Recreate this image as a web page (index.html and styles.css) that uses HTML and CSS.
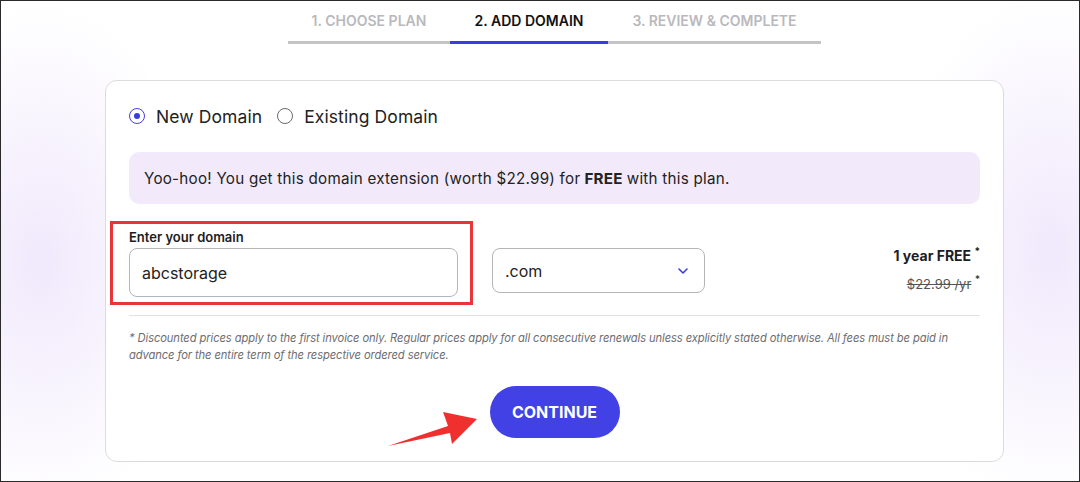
FILE: index.html
```html
<!DOCTYPE html>
<html lang="en">
<head>
    <meta charset="UTF-8">
    <meta name="viewport" content="width=device-width, initial-scale=1.0">
    <title>Add Domain</title>
    <link rel="stylesheet" href="styles.css">
</head>
<body>
    <div class="page">
        <div class="wrap">
            <div class="steps">
                <div class="step step-1">1. CHOOSE PLAN</div>
                <div class="step step-2 active">2. ADD DOMAIN</div>
                <div class="step step-3">3. REVIEW &amp; COMPLETE</div>
            </div>

            <div class="card">
                <div class="radios">
                    <label class="radio checked"><span class="dot"></span>New Domain</label>
                    <label class="radio"><span class="dot"></span>Existing Domain</label>
                </div>

                <div class="promo">
                    Yoo-hoo! You get this domain extension (worth $22.99) for <b>FREE</b> with this plan.
                </div>

                <div class="domain-row">
                    <div class="field">
                        <label for="domain">Enter your domain</label>
                        <input type="text" id="domain" value="abcstorage">
                    </div>
                    <div class="select">
                        <span>.com</span>
                        <svg width="10" height="6" viewBox="0 0 10 6"><path d="M1 1l4 4 4-4" fill="none" stroke="#3b3be0" stroke-width="1.6" stroke-linecap="round" stroke-linejoin="round"/></svg>
                    </div>
                    <div class="price">
                        <div class="free">1 year FREE <sup>*</sup></div>
                        <div class="old"><s>$22.99 /yr</s> <sup>*</sup></div>
                    </div>
                </div>

                <p class="note">* Discounted prices apply to the first invoice only. Regular prices apply for all consecutive renewals unless explicitly stated otherwise. All fees must be paid in advance for the entire term of the respective ordered service.</p>

                <div class="actions">
                    <button class="continue">CONTINUE</button>
                </div>
            </div>
        </div>

        <!-- red pointer arrow -->
        <svg class="pointer" width="100" height="50" viewBox="380 400 100 50">
            <polygon points="388,446 448,426 443,412 477,419 452,444 450,433" fill="#f0302f"/>
        </svg>
    </div>
</body>
</html>
```

FILE: styles.css
```css
body {
    margin: 0;
    font-family: "Inter", "Noto Sans", sans-serif;
    color: #1d1d1f;
}
.page {
    position: relative;
    height: 482px;
    box-sizing: border-box;
    border: 1px solid #2a2a2a;
    overflow: hidden;
    background:
        radial-gradient(ellipse 160px 260px at 40px 260px, rgba(222, 205, 248, 0.45), rgba(255, 255, 255, 0)),
        radial-gradient(ellipse 160px 260px at 1050px 250px, rgba(222, 205, 248, 0.45), rgba(255, 255, 255, 0)),
        #fff;
}
.wrap {
    width: 899px;
    margin-left: 104px;
}
.steps {
    display: grid;
    grid-template-columns: 162px 158px 213px;
    width: 533px;
    margin: 0 auto 36px;
}
.step {
    font-size: 14px;
    font-weight: 600;
    line-height: 16px;
    color: #b9b9bd;
    text-align: center;
    padding: 12px 0 12px;
    border-bottom: 3px solid #c4c4c6;
}
.step.active {
    color: #111;
    border-bottom-color: #3b3be0;
}
.card {
    background: #fff;
    border: 1px solid #dcdcdf;
    border-radius: 12px;
    padding: 24px 23px 23px;
}
.radios {
    display: flex;
    gap: 15px;
    height: 22px;
    align-items: center;
}
.radio {
    display: flex;
    align-items: center;
    gap: 11px;
    font-size: 17.5px;
    letter-spacing: 0.1px;
    color: #222;
}
.radio .dot {
    width: 14px;
    height: 14px;
    border: 1.5px solid #6a6a6a;
    border-radius: 50%;
    position: relative;
}
.radio.checked .dot {
    border-color: #4a3fe0;
}
.radio.checked .dot::after {
    content: "";
    position: absolute;
    top: 4px;
    left: 4px;
    width: 6px;
    height: 6px;
    border-radius: 50%;
    background: #3b3be0;
}
.promo {
    margin-top: 25px;
    background: #f2eafb;
    border-radius: 10px;
    padding: 0 15px;
    height: 52px;
    display: flex;
    align-items: center;
    font-size: 15.2px;
    letter-spacing: 0.25px;
    color: #222;
}
.promo b {
    margin: 0 4px;
    font-weight: 700;
}
.domain-row {
    display: flex;
    align-items: flex-start;
    margin-top: 17px;
}
.field {
    border: 3px solid #e8353a;
    padding: 4px 12px 5px 16px;
    margin-left: -19px;
}
.field label {
    display: block;
    font-size: 13px;
    font-weight: 600;
    line-height: 18px;
    margin-bottom: 2px;
}
.field input {
    display: block;
    width: 329px;
    height: 49px;
    box-sizing: border-box;
    border: 1px solid #b5b5b8;
    border-radius: 8px;
    padding: 0 12px;
    font-family: inherit;
    font-size: 16px;
    color: #222;
}
.select {
    margin: 27px 0 0 19px;
    width: 213px;
    height: 45px;
    box-sizing: border-box;
    border: 1px solid #b5b5b8;
    border-radius: 8px;
    padding: 0 16px 0 12px;
    display: flex;
    align-items: center;
    justify-content: space-between;
    font-size: 16px;
    color: #222;
}
.price {
    margin-left: auto;
    margin-top: 21px;
    text-align: right;
}
.price sup {
    font-size: 10px;
    vertical-align: 6px;
    color: #222;
}
.free {
    font-size: 14px;
    font-weight: 700;
    line-height: 18px;
}
.old {
    margin-top: 6px;
    font-size: 13px;
    line-height: 16px;
    color: #555;
}
.note {
    margin: 10px 0 0;
    padding-top: 14px;
    border-top: 1px solid #e2e2e4;
    font-size: 11.2px;
    font-style: italic;
    line-height: 17px;
    letter-spacing: -0.1px;
    color: #6d6d70;
}
.actions {
    display: flex;
    justify-content: center;
    margin-top: 22px;
}
.continue {
    width: 130px;
    height: 52px;
    border: none;
    border-radius: 26px;
    background: #4141e6;
    color: #fff;
    font-family: inherit;
    font-size: 16px;
    font-weight: 700;
    cursor: pointer;
}
.pointer {
    position: absolute;
    left: 379px;
    top: 399px;
}
```
